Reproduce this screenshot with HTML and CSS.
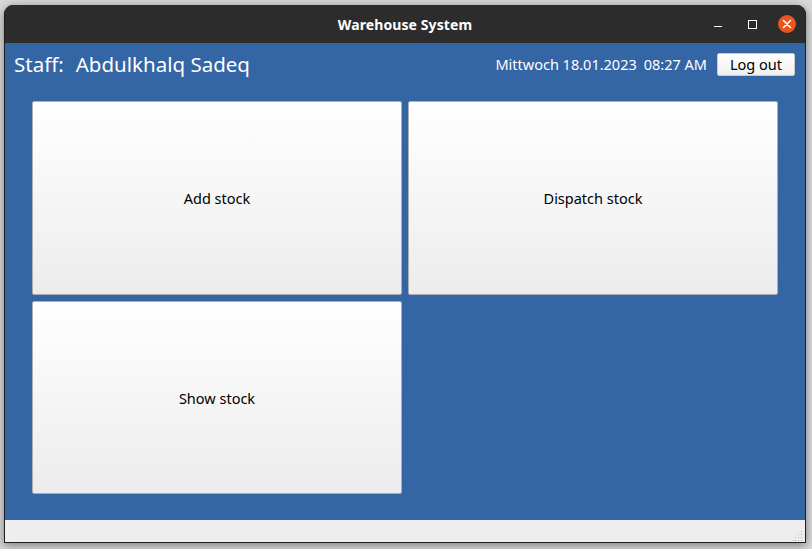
FILE: index.html
```html
<!DOCTYPE html>
<html>
<head>
<meta charset="utf-8">
<link rel="stylesheet" href="styles.css">
</head>
<body>
<div class="window">
  <div class="titlebar">
    <div class="title">Warehouse System</div>
    <div class="controls">
      <span class="ctl-min"></span>
      <span class="ctl-max"></span>
      <span class="ctl-close">
        <svg width="10" height="10" viewBox="0 0 10 10"><path d="M1.5 1.5 L8.5 8.5 M8.5 1.5 L1.5 8.5" stroke="#fff" stroke-width="1.6" stroke-linecap="round"/></svg>
      </span>
    </div>
  </div>
  <div class="content">
    <div class="header">
      <div class="staff"><span class="staff-label">Staff:</span><span>Abdulkhalq Sadeq</span></div>
      <div class="right">
        <span class="datetime"><span class="date">Mittwoch 18.01.2023</span><span>08:27 AM</span></span>
        <button class="logout">Log out</button>
      </div>
    </div>
    <div class="grid">
      <button class="tile">Add stock</button>
      <button class="tile">Dispatch stock</button>
      <button class="tile">Show stock</button>
    </div>
  </div>
  <div class="statusbar">
    <svg class="grip" width="10" height="10" viewBox="0 0 10 10" fill="#b4b4b4">
      <rect x="8" y="0" width="1" height="1"/>
      <rect x="5" y="3" width="1" height="1"/><rect x="8" y="3" width="1" height="1"/>
      <rect x="2" y="6" width="1" height="1"/><rect x="5" y="6" width="1" height="1"/><rect x="8" y="6" width="1" height="1"/>
      <rect x="0" y="9" width="1" height="1"/><rect x="2" y="9" width="1" height="1"/><rect x="5" y="9" width="1" height="1"/><rect x="8" y="9" width="1" height="1"/>
    </svg>
  </div>
</div>
</body>
</html>
```
FILE: styles.css
```css
html, body {
  margin: 0;
  padding: 0;
}
body {
  width: 812px;
  height: 549px;
  background: #d9d9d9;
  font-family: "Noto Sans", "Open Sans", sans-serif;
  overflow: hidden;
}
.window {
  margin: 5px 0 0 4px;
  width: 802px;
  height: 538px;
  display: flex;
  flex-direction: column;
  border-radius: 9px 9px 0 0;
  box-shadow: 0 2px 10px rgba(0,0,0,0.45);
  background: #2c2c2c;
  box-sizing: border-box;
  border: 1px solid #1f1f1f;
  border-top: none;
  overflow: hidden;
}
.titlebar {
  height: 38px;
  flex: none;
  background: #2c2c2c;
  position: relative;
  display: flex;
  align-items: center;
  justify-content: center;
}
.title {
  color: #ffffff;
  font-weight: bold;
  font-size: 14px;
  letter-spacing: 0.1px;
}
.controls {
  position: absolute;
  right: 9px;
  top: 10px;
  display: flex;
  align-items: center;
}
.ctl-min {
  width: 8px;
  height: 1.5px;
  background: #fff;
  margin-right: 26px;
  margin-top: 5px;
}
.ctl-max {
  width: 7px;
  height: 7px;
  border: 1.3px solid #fff;
  margin-right: 21px;
}
.ctl-close {
  width: 18px;
  height: 18px;
  border-radius: 50%;
  background: #e95420;
  display: flex;
  align-items: center;
  justify-content: center;
}
.content {
  flex: 1;
  background: #3465a4;
  display: flex;
  flex-direction: column;
}
.header {
  display: flex;
  justify-content: space-between;
  align-items: center;
  padding: 9px 10px 0 9px;
  height: 24px;
}
.staff {
  color: #ffffff;
  font-size: 20.5px;
  display: flex;
  gap: 12px;
}
.right {
  display: flex;
  align-items: center;
  gap: 10px;
}
.datetime {
  color: #ffffff;
  font-size: 14.5px;
  display: flex;
  gap: 7px;
}
.logout {
  width: 78px;
  height: 23px;
  font-family: inherit;
  font-size: 14.5px;
  color: #000;
  background: linear-gradient(#ffffff, #f0f0f0);
  border: 1px solid #c9c9c9;
  border-radius: 2px;
  padding: 0;
}
.grid {
  flex: 1;
  display: grid;
  grid-template-columns: 370px 370px;
  grid-template-rows: 194px 193px;
  gap: 6px;
  padding: 25px 0 0 27px;
}
.tile {
  font-family: inherit;
  font-size: 14.5px;
  color: #000;
  background: linear-gradient(#ffffff, #ececec);
  border: 1px solid #aeaeae;
  border-radius: 2px;
  padding: 0;
}
.statusbar {
  height: 22px;
  flex: none;
  background: #eeeeee;
  position: relative;
}
.grip {
  position: absolute;
  right: 2px;
  bottom: 1px;
}
```
